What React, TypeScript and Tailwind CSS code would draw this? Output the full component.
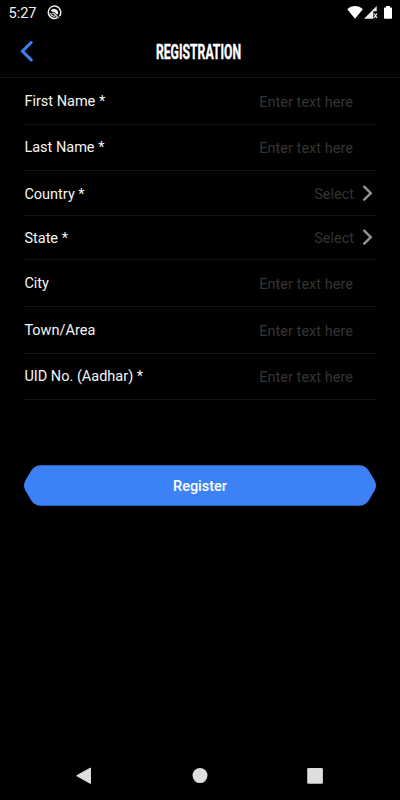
type Field = { label: string; select?: boolean; row: string };

const fields: Field[] = [
  { label: "First Name *", row: "h-[47px] pt-[14px]" },
  { label: "Last Name *", row: "h-[46px] pt-[13px]" },
  { label: "Country *", select: true, row: "h-[45px] pt-[14px]" },
  { label: "State *", select: true, row: "h-[44px] pt-[13px]" },
  { label: "City", row: "h-[47px] pt-[14px]" },
  { label: "Town/Area", row: "h-[47px] pt-[14px]" },
  { label: "UID No. (Aadhar) *", row: "h-[46px] pt-[13px]" },
];

function StatusBar() {
  return (
    <div className="flex h-[26px] items-center pl-[8.5px] pr-2">
      <span className="w-[38.5px] pt-px text-[14.5px] leading-[25px] text-[#f2f2f2]">5:27</span>
      <svg className="-mt-px" width="15" height="15" viewBox="0 0 15 15" fill="none">
        <path d="M12.300 11.200A6.200 6.200 0 1 0 10.500 12.700" stroke="#eee" strokeWidth="1.500" />
        <path d="M3.700 5.600A4.100 4.100 0 0 1 11.100 8.600L10.200 9.700 7.300 6.900 5.200 6.700z" fill="#eee" />
        <path d="M3.600 7.700q.3 3 3.700 3.600l1-.6M5.200 8.200l1.700.2 4.700 4.400" stroke="#eee" strokeWidth="1.100" />
      </svg>
      <svg className="ml-auto" width="46" height="16" viewBox="346 5 46 16" fill="#fff">
        <path d="M347.3 9.2c4.6-4.4 10.9-4.4 15.5 0L355 18.7z" />
        <path d="M376.7 6v5.2h-3.4v7.5H364z" fill="#eee" />
        <path d="m374 13.500 3 4.500m0-4.500-3 4.500" stroke="#fff" strokeWidth="1.1" />
        <path d="M386 6h4v1.500h1.200q.8 0 .8.8v9.700q0 .8-.8.8h-6.400q-.8 0-.8-.8V8.300q0-.8.8-.8h1.200z" />
      </svg>
    </div>
  );
}

export default function App() {
  return (
    <div className="flex h-[800px] w-[400px] flex-col bg-black font-['Roboto',sans-serif] text-white">
      <StatusBar />
      <header className="grid h-[52px] grid-cols-[60px_1fr_64px] items-center border-b border-[#151515]">
        <svg className="ml-5" width="14" height="22" viewBox="0 0 14 22" fill="none">
          <path d="M11.200 1.500 2.400 10.200l8.800 8.700" stroke="#3c82f6" strokeWidth="3" strokeLinecap="round" />
        </svg>
        <h1 className="flex justify-center text-[20.5px] font-bold leading-6">
          <span className="origin-center scale-x-[0.595] [-webkit-text-stroke:0.4px_white]">REGISTRATION</span>
        </h1>
      </header>
      <main className="px-6">
        {fields.map((f) => (
          <div key={f.label} className={`flex items-start justify-between border-b border-[#151515] text-[14.5px] leading-5 ${f.row}`}>
            <span className="pl-[0.4px] text-[#f5f5f5]">{f.label}</span>
            {f.select ? (
              <span className="flex text-[#343434]">
                Select
                <svg className="ml-2 mr-[2px] -mt-px" width="12" height="18" viewBox="0 0 12 18" fill="none">
                  <path d="m2.200 2.700 6.600 6.500-6.600 6.500" stroke="#929298" strokeWidth="2.400" strokeLinecap="round" />
                </svg>
              </span>
            ) : (
              <span className="mr-[23px] pt-px tracking-[0.03px] text-[#343434]">Enter text here</span>
            )}
          </div>
        ))}
        <button className="mt-[65px] grid h-[41px] w-full items-center">
          <svg className="col-start-1 row-start-1" width="352" height="41" viewBox="0 0 352 41">
            <path d="M17 .2h318q6 0 9.500 5l6 10q3 5.300 0 10.600l-6 10q-3.500 5-9.500 5H17q-6 0-9.500-5l-6-10q-3-5.300 0-10.600l6-10Q11 .2 17 .2z" fill="#3c82f6" />
          </svg>
          <span className="z-10 col-start-1 row-start-1 pt-[2px] text-[14.5px] font-medium leading-5">Register</span>
        </button>
      </main>
      <nav className="mt-auto h-12">
        <svg width="400" height="48" viewBox="0 752 400 48" fill="#dedede">
          <path d="M90.500 768v15.500L76.700 775.700z" stroke="#dedede" strokeLinejoin="round" />
          <circle cx="200" cy="775.600" r="7.500" />
          <rect x="307.200" y="768" width="15.700" height="15.700" rx="1.300" />
        </svg>
      </nav>
    </div>
  );
}
